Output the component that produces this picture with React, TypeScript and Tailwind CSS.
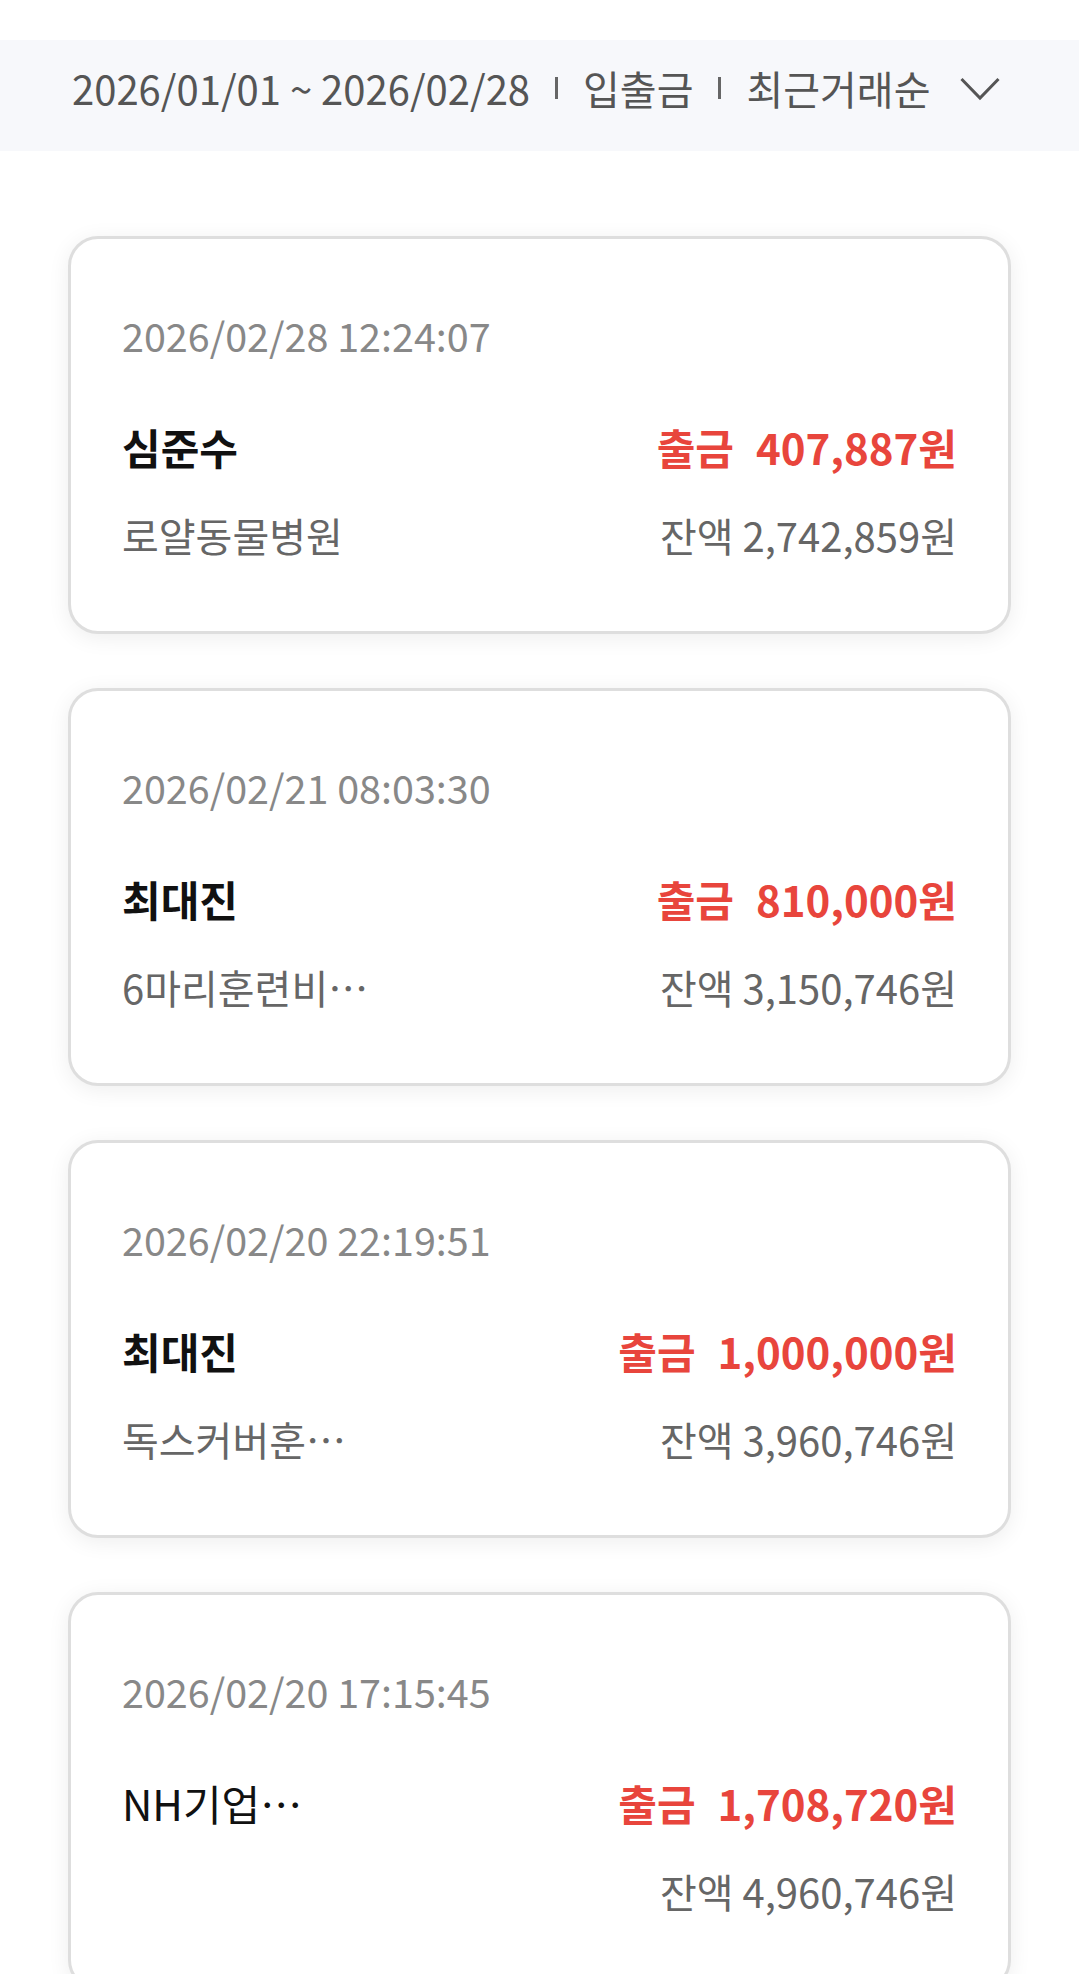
const rows = [
  {
    date: "2026/02/28 12:24:07",
    name: "심준수",
    bold: true,
    amount: "407,887원",
    memo: "로얄동물병원",
    balance: "2,742,859원",
  },
  {
    date: "2026/02/21 08:03:30",
    name: "최대진",
    bold: true,
    amount: "810,000원",
    memo: "6마리훈련비…",
    balance: "3,150,746원",
  },
  {
    date: "2026/02/20 22:19:51",
    name: "최대진",
    bold: true,
    amount: "1,000,000원",
    memo: "독스커버훈…",
    balance: "3,960,746원",
  },
  {
    date: "2026/02/20 17:15:45",
    name: "NH기업…",
    bold: false,
    amount: "1,708,720원",
    memo: "",
    balance: "4,960,746원",
  },
];

function Divider() {
  return <span className="mx-[25px] inline-block h-[22px] w-[3px] bg-[#666]" />;
}

export default function App() {
  return (
    <div
      className="min-h-screen bg-white pt-[40px]"
      style={{ fontFamily: '"Noto Sans CJK KR", "Noto Sans", sans-serif' }}
    >
      {/* 필터 바 */}
      <div className="flex h-[111px] items-center bg-[#f7f8fb] pl-[72px] pb-[15px] text-[40px] leading-[40px] text-[#555]">
        <span>2026/01/01 ~ 2026/02/28</span>
        <Divider />
        <span>입출금</span>
        <Divider />
        <span>최근거래순</span>
        <svg className="ml-[30px] mt-[2px]" width="40" height="24" viewBox="0 0 40 24">
          <polyline
            points="1.5,2 20,21 38.5,2"
            fill="none"
            stroke="#555"
            strokeWidth="3"
          />
        </svg>
      </div>

      {/* 거래 목록 */}
      <div className="flex flex-col gap-[54px] px-[68px] pt-[85px]">
        {rows.map((r, i) => (
          <div
            key={i}
            className="rounded-[30px] border-[3px] border-[#dedede] bg-white px-[51px] pt-[76px] pb-[76px] shadow-[0_4px_22px_rgba(0,0,0,0.07)]"
          >
            <p className="text-[39.5px] leading-[40px] text-[#888]">{r.date}</p>
            <div className="mt-[72px] flex items-baseline justify-between text-[42px] leading-[40px]">
              <span className={r.bold ? "font-bold text-[#111]" : "text-[#111]"}>
                {r.name}
              </span>
              <span className="font-bold text-[#e8453c]">
                출금<span className="ml-[22px]">{r.amount}</span>
              </span>
            </div>
            <div className="mt-[48px] flex items-baseline justify-between text-[40px] leading-[40px] text-[#666]">
              <span>{r.memo}</span>
              <span>잔액 {r.balance}</span>
            </div>
          </div>
        ))}
      </div>
    </div>
  );
}
